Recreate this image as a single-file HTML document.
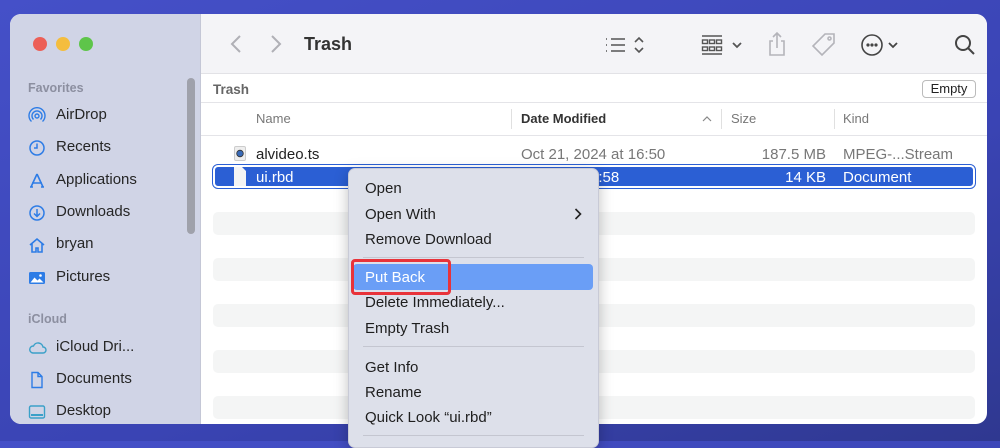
<!DOCTYPE html>
<html><head><meta charset="utf-8"><style>
*{margin:0;padding:0;box-sizing:border-box}
body{width:1000px;height:441px;overflow:hidden;background:linear-gradient(160deg,#4550c8 0%,#3a44b4 60%,#2f3890 100%);font-family:"Liberation Sans",sans-serif;position:relative}
.win{position:absolute;left:10px;top:14px;width:977px;height:410px;border-radius:11px;overflow:hidden;background:#fff}
.side{position:absolute;left:0;top:0;width:191px;height:410px;background:#d0d4e6;border-right:1px solid #c4c7d6}
.tool{position:absolute;left:191px;top:0;right:0;height:60px;background:#f4f4f7;border-bottom:1px solid #e2e2e6}
.t{position:absolute;white-space:nowrap}
.dot{position:absolute;top:23px;width:14px;height:14px;border-radius:50%}
.si{position:absolute;left:18px;font-size:15px;color:#262626;white-space:nowrap}
.si svg{position:absolute;left:0;top:1px}
.si span{position:absolute;left:28px;top:0;white-space:nowrap}
.hdr{font-size:12.5px;color:#8c8fa0;font-weight:bold}
.stripe{position:absolute;left:203px;width:762px;height:23px;background:#f4f5f5;border-radius:5px}
.menu{position:absolute;left:348px;top:168px;width:251px;height:280px;background:#dde0ea;border-radius:7px;box-shadow:0 4px 14px rgba(0,0,0,.25);border:1px solid #c8cad6}
.mi{position:absolute;left:16px;font-size:15px;color:#1e1e1e;white-space:nowrap}
.sep{position:absolute;left:14px;right:14px;height:1px;background:#c4c6d0}
</style></head><body>
<div class="win">
 <div class="side">
  <div class="dot" style="left:23px;background:#ec5f57"></div>
  <div class="dot" style="left:46px;background:#f4bd3e"></div>
  <div class="dot" style="left:69px;background:#5ec54a"></div>
  <div style="position:absolute;left:177px;top:64px;width:8px;height:156px;border-radius:4px;background:#9fa1ab"></div>
  <div class="t hdr" style="left:18px;top:67px">Favorites</div>
  <div class="si" style="top:92px"><svg width="18" height="18" viewBox="0 0 18 18" fill="none" stroke="#2d7ce6" stroke-width="1.4"><circle cx="9" cy="9" r="2"/><path d="M5.5 12.5a5 5 0 1 1 7 0M3.5 14.5a8 8 0 1 1 11 0"/></svg><span>AirDrop</span></div>
  <div class="si" style="top:124px"><svg width="18" height="18" viewBox="0 0 18 18" fill="none" stroke="#2d7ce6" stroke-width="1.5"><circle cx="9" cy="9" r="7"/><path d="M9 4.5V9H6"/></svg><span>Recents</span></div>
  <div class="si" style="top:157px"><svg width="18" height="18" viewBox="0 0 18 18" fill="none" stroke="#2d7ce6" stroke-width="1.6"><path d="M9 2L3 15M9 2l6 13M4 11h10M2 15h3M13 15h3"/></svg><span>Applications</span></div>
  <div class="si" style="top:189px"><svg width="18" height="18" viewBox="0 0 18 18" fill="none" stroke="#2d7ce6" stroke-width="1.5"><circle cx="9" cy="9" r="7"/><path d="M9 5v7M6 9.5l3 3 3-3"/></svg><span>Downloads</span></div>
  <div class="si" style="top:221px"><svg width="18" height="18" viewBox="0 0 18 18" fill="none" stroke="#2d7ce6" stroke-width="1.6"><path d="M2 9l7-6 7 6M4 7.5V16h4v-4h2v4h4V7.5"/></svg><span>bryan</span></div>
  <div class="si" style="top:254px"><svg width="18" height="18" viewBox="0 0 18 18"><rect x="1" y="3" width="16" height="12" rx="1.5" fill="#2d7ce6"/><path d="M2.5 13.5l4-5 3 3 2-2 4 4z" fill="#fff"/><circle cx="12.5" cy="6.5" r="1.3" fill="#fff"/></svg><span>Pictures</span></div>
  <div class="t hdr" style="left:18px;top:298px">iCloud</div>
  <div class="si" style="top:324px"><svg width="20" height="18" viewBox="0 0 20 18" fill="none" stroke="#3aa0c8" stroke-width="1.4"><path d="M5 14h10a3 3 0 0 0 0-6 5 5 0 0 0-9.5-1A3.5 3.5 0 0 0 5 14z"/></svg><span>iCloud Dri...</span></div>
  <div class="si" style="top:356px"><svg width="18" height="18" viewBox="0 0 18 18" fill="none" stroke="#2d7ce6" stroke-width="1.4"><path d="M4 1.5h6l4 4V16.5H4z M10 1.5v4h4"/></svg><span>Documents</span></div>
  <div class="si" style="top:388px"><svg width="18" height="18" viewBox="0 0 18 18" fill="none" stroke="#3aa0c8" stroke-width="1.4"><rect x="1.5" y="3" width="15" height="12" rx="1.5"/><path d="M3 12h12" stroke-width="2"/></svg><span>Desktop</span></div>
 </div>
 <div class="tool">
  <svg style="position:absolute;left:28px;top:20px" width="14" height="20" viewBox="0 0 14 20" fill="none" stroke="#b0b0b6" stroke-width="2"><path d="M11 2L3 10l8 8"/></svg>
  <svg style="position:absolute;left:68px;top:20px" width="14" height="20" viewBox="0 0 14 20" fill="none" stroke="#b0b0b6" stroke-width="2"><path d="M3 2l8 8-8 8"/></svg>
  <div class="t" style="left:103px;top:20px;font-size:18px;font-weight:bold;color:#333">Trash</div>
  <svg style="position:absolute;left:404px;top:20px" width="50" height="22" viewBox="0 0 50 22" fill="none" stroke="#555" stroke-width="1.6"><path d="M1 5h1M1 11h1M1 17h1M6 5h14M6 11h14M6 17h14M30 8l4-4 4 4M30 14l4 4 4-4"/></svg>
  <svg style="position:absolute;left:500px;top:20px" width="46" height="22" viewBox="0 0 46 22" fill="none" stroke="#555" stroke-width="1.4"><path d="M1 2h20M1 20h20"/><rect x="1.5" y="6" width="5" height="3.5"/><rect x="8.5" y="6" width="5" height="3.5"/><rect x="15.5" y="6" width="5" height="3.5"/><rect x="1.5" y="13" width="5" height="3.5"/><rect x="8.5" y="13" width="5" height="3.5"/><rect x="15.5" y="13" width="5" height="3.5"/><path d="M32 9l4 4 4-4" stroke-width="1.8"/></svg>
  <svg style="position:absolute;left:566px;top:16px" width="20" height="28" viewBox="0 0 20 28" fill="none" stroke="#b4b4ba" stroke-width="1.6"><path d="M10 3v15M6 7l4-4 4 4M6 11H3v14h14V11h-3"/></svg>
  <svg style="position:absolute;left:610px;top:18px" width="26" height="26" viewBox="0 0 26 26" fill="none" stroke="#b4b4ba" stroke-width="1.6"><path d="M14 2h9v9L11 23 2 14z"/><circle cx="18.5" cy="6.5" r="1.5"/></svg>
  <svg style="position:absolute;left:660px;top:19px" width="44" height="24" viewBox="0 0 44 24" fill="none" stroke="#444" stroke-width="1.6"><circle cx="11" cy="12" r="10"/><circle cx="7" cy="12" r=".8" fill="#444"/><circle cx="11" cy="12" r=".8" fill="#444"/><circle cx="15" cy="12" r=".8" fill="#444"/><path d="M28 10l4 4 4-4" stroke-width="1.8"/></svg>
  <svg style="position:absolute;left:753px;top:20px" width="22" height="22" viewBox="0 0 22 22" fill="none" stroke="#444" stroke-width="2"><circle cx="9" cy="9" r="7"/><path d="M14 14l6 6"/></svg>
 </div>
 <div style="position:absolute;left:191px;top:61px;right:0;height:28px;border-bottom:1px solid #e4e4e8;background:#fff"></div>
 <div class="t" style="left:203px;top:68px;font-size:13.5px;font-weight:bold;color:#666">Trash</div>
 <div class="t" style="left:912px;top:66px;width:54px;height:18px;border:1px solid #bbb;border-radius:4px;font-size:13px;text-align:center;line-height:16px;color:#222">Empty</div>
 <div style="position:absolute;left:191px;top:121px;right:0;height:1px;background:#e4e4e8"></div>
 <div class="t" style="left:246px;top:97px;font-size:13px;color:#777">Name</div>
 <div style="position:absolute;left:501px;top:95px;width:1px;height:20px;background:#e0e0e0"></div>
 <div class="t" style="left:511px;top:97px;font-size:13px;color:#333;font-weight:bold">Date Modified</div>
 <svg style="position:absolute;left:692px;top:102px" width="10" height="6" viewBox="0 0 10 6" fill="none" stroke="#888" stroke-width="1.2"><path d="M1 5l4-4 4 4"/></svg>
 <div style="position:absolute;left:711px;top:95px;width:1px;height:20px;background:#e0e0e0"></div>
 <div class="t" style="left:721px;top:97px;font-size:13px;color:#777">Size</div>
 <div style="position:absolute;left:824px;top:95px;width:1px;height:20px;background:#e0e0e0"></div>
 <div class="t" style="left:833px;top:97px;font-size:13px;color:#777">Kind</div>
 <svg style="position:absolute;left:224px;top:132px" width="12" height="15" viewBox="0 0 12 15"><rect x=".5" y=".5" width="11" height="14" rx="1.5" fill="#eee" stroke="#ccc"/><circle cx="6" cy="7.5" r="3.3" fill="#3a6bb8" stroke="#333" stroke-width=".8"/></svg>
 <div class="t" style="left:246px;top:132px;font-size:15px;color:#222">alvideo.ts</div>
 <div class="t" style="left:511px;top:132px;font-size:15px;color:#777">Oct 21, 2024 at 16:50</div>
 <div class="t" style="left:716px;top:132px;width:100px;text-align:right;font-size:15px;color:#777">187.5 MB</div>
 <div class="t" style="left:833px;top:132px;font-size:15px;color:#777">MPEG-...Stream</div>
 <div style="position:absolute;left:203px;top:151px;width:762px;height:23px;background:#2b5fd4;border:2px solid #fff;outline:1.5px solid #2b5fd4;border-radius:5px"></div>
 <svg style="position:absolute;left:224px;top:153px" width="12" height="19" viewBox="0 0 12 19"><path d="M0 0h8l4 4v15H0z" fill="#f4f4f4"/></svg>
 <div class="t" style="left:246px;top:155px;font-size:15px;color:#fff">ui.rbd</div>
 <div class="t" style="left:580px;top:155px;font-size:15px;color:#fff">9:58</div>
 <div class="t" style="left:716px;top:155px;width:100px;text-align:right;font-size:15px;color:#fff">14 KB</div>
 <div class="t" style="left:833px;top:155px;font-size:15px;color:#fff">Document</div>
 <div class="stripe" style="top:198px"></div>
 <div class="stripe" style="top:244px"></div>
 <div class="stripe" style="top:290px"></div>
 <div class="stripe" style="top:336px"></div>
 <div class="stripe" style="top:382px"></div>
</div>
<div class="menu">
 <div class="mi" style="top:11px">Open</div>
 <div class="mi" style="top:37px">Open With</div>
 <svg style="position:absolute;left:225px;top:39px" width="8" height="12" viewBox="0 0 8 12" fill="none" stroke="#222" stroke-width="1.6"><path d="M1.5 1l5 5-5 5"/></svg>
 <div class="mi" style="top:62px">Remove Download</div>
 <div class="sep" style="top:88px"></div>
 <div style="position:absolute;left:4px;right:5px;top:95px;height:26px;background:#6a9ef6;border-radius:4px"></div>
 <div style="position:absolute;left:2px;top:90px;width:100px;height:36px;border:3px solid #e8333a;border-radius:4px"></div>
 <div class="mi" style="top:100px;color:#fff">Put Back</div>
 <div class="mi" style="top:125px">Delete Immediately...</div>
 <div class="mi" style="top:151px">Empty Trash</div>
 <div class="sep" style="top:177px"></div>
 <div class="mi" style="top:190px">Get Info</div>
 <div class="mi" style="top:215px">Rename</div>
 <div class="mi" style="top:240px">Quick Look “ui.rbd”</div>
 <div class="sep" style="top:266px"></div>
</div>
</body></html>
